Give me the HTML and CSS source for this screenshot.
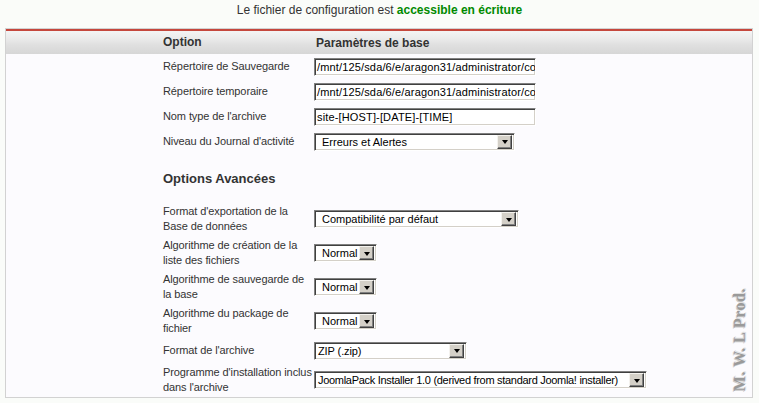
FILE: index.html
```html
<!DOCTYPE html>
<html lang="fr">
<head>
<meta charset="utf-8">
<title>Configuration</title>
<link rel="stylesheet" href="styles.css">
</head>
<body>
<p class="status">Le fichier de configuration est <strong class="ok">accessible en écriture</strong></p>
<div class="panel">
  <div class="row head">
    <div class="lbl">Option</div>
    <div class="hc2">Paramètres de base</div>
  </div>
  <div class="row">
    <div class="lbl">Répertoire de Sauvegarde</div>
    <div><span class="field w222">/mnt/125/sda/6/e/aragon31/administrator/components/com_joomlapack/backup</span></div>
  </div>
  <div class="row">
    <div class="lbl">Répertoire temporaire</div>
    <div><span class="field w222">/mnt/125/sda/6/e/aragon31/administrator/components/com_joomlapack/temp</span></div>
  </div>
  <div class="row">
    <div class="lbl">Nom type de l'archive</div>
    <div><span class="field w222">site-[HOST]-[DATE]-[TIME]</span></div>
  </div>
  <div class="row">
    <div class="lbl">Niveau du Journal d'activité</div>
    <div><span class="select w201"><span class="val">Erreurs et Alertes</span><span class="btn"><i class="arrow"></i></span></span></div>
  </div>
  <div class="section">Options Avancées</div>
  <div class="row tall">
    <div class="lbl">Format d'exportation de la<br>Base de données</div>
    <div><span class="select w205"><span class="val">Compatibilité par défaut</span><span class="btn"><i class="arrow"></i></span></span></div>
  </div>
  <div class="row tall">
    <div class="lbl">Algorithme de création de la<br>liste des fichiers</div>
    <div><span class="select w63"><span class="val">Normal</span><span class="btn"><i class="arrow"></i></span></span></div>
  </div>
  <div class="row tall">
    <div class="lbl">Algorithme de sauvegarde de<br>la base</div>
    <div><span class="select w63"><span class="val">Normal</span><span class="btn"><i class="arrow"></i></span></span></div>
  </div>
  <div class="row tall">
    <div class="lbl">Algorithme du package de<br>fichier</div>
    <div><span class="select w63"><span class="val">Normal</span><span class="btn"><i class="arrow"></i></span></span></div>
  </div>
  <div class="row">
    <div class="lbl">Format de l'archive</div>
    <div><span class="select w153"><span class="val tight">ZIP (.zip)</span><span class="btn"><i class="arrow"></i></span></span></div>
  </div>
  <div class="row tall">
    <div class="lbl">Programme d'installation inclus<br>dans l'archive</div>
    <div><span class="select w333"><span class="val tight narrow">JoomlaPack Installer 1.0 (derived from standard Joomla! installer)</span><span class="btn"><i class="arrow"></i></span></span></div>
  </div>
  <div class="wm">M. W. L Prod.</div>
</div>
</body>
</html>
```
FILE: styles.css
```css
* { box-sizing: border-box; }

body {
  margin: 0;
  background: #fafcf9;
  font-family: "Liberation Sans", Arial, sans-serif;
  font-size: 11px;
  color: #333;
}

.status {
  margin: 0;
  height: 28px;
  line-height: 20px;
  text-align: center;
  font-size: 12px;
  color: #333;
}

.ok {
  color: #008a00;
}

.panel {
  position: relative;
  margin: 0 6px 0 5px;
  border: 1px solid #d2d2d2;
  background: #fcfbfe;
}

.row {
  display: grid;
  grid-template-columns: 151px 1fr;
  align-items: center;
  min-height: 25px;
  padding-left: 157px;
}

.row.tall {
  min-height: 34px;
}

.lbl {
  line-height: 15px;
  white-space: nowrap;
  letter-spacing: -0.1px;
}

.head {
  min-height: 0;
  height: 25px;
  border-top: 2px solid #c5473d;
  background: linear-gradient(#f4f4f4 0%, #eaeaea 35%, #e0e0e0 60%, #d6d6d6 100%);
  font-weight: bold;
  font-size: 12px;
  color: #333;
}

.head .lbl {
  letter-spacing: 0;
}

.hc2 {
  padding-left: 2px;
}

.section {
  padding: 16px 0 14px 157px;
  line-height: 18px;
  font-size: 13px;
  font-weight: bold;
  color: #333;
}

.field,
.select {
  display: flex;
  align-items: center;
  height: 18px;
  background: #fff;
  border: 1px solid;
  border-color: #808080 #fff #fff #808080;
  box-shadow: inset 1px 1px 0 #404040, inset -1px -1px 0 #d4d0c8;
  color: #000;
  overflow: hidden;
  white-space: nowrap;
  font-size: 11px;
}

.field {
  padding-left: 2px;
  letter-spacing: 0.15px;
}

.w222 { width: 222px; }
.w201 { width: 201px; }
.w205 { width: 205px; }
.w63 { width: 63px; }
.w153 { width: 153px; }
.w333 { width: 333px; }

.select {
  padding: 1px;
}

.val {
  flex: 1;
  padding-left: 6px;
  overflow: hidden;
}

.val.tight {
  padding-left: 2px;
  letter-spacing: -0.1px;
}

.val.narrow {
  letter-spacing: -0.3px;
}

.btn {
  display: flex;
  align-items: center;
  justify-content: center;
  flex: none;
  width: 15px;
  height: 14px;
  margin-right: 1px;
  background: #d4d0c8;
  border: 1px solid;
  border-color: #f4f2ee #404040 #404040 #f4f2ee;
  box-shadow: inset -1px -1px 0 #808080;
}

.arrow {
  display: block;
  width: 0;
  height: 0;
  border-top: 4px solid #000;
  border-left: 3.5px solid transparent;
  border-right: 3.5px solid transparent;
  margin-top: 1px;
}

.wm {
  position: absolute;
  right: 5px;
  bottom: 6px;
  writing-mode: vertical-rl;
  transform: rotate(180deg);
  font-family: "Liberation Serif", "Times New Roman", serif;
  font-weight: bold;
  font-size: 16px;
  line-height: 14px;
  color: #9a9a9a;
  text-shadow: 1px 1px 0 #e2e2e2, -1px -1px 0 #cacaca;
  letter-spacing: 0.5px;
}
```
